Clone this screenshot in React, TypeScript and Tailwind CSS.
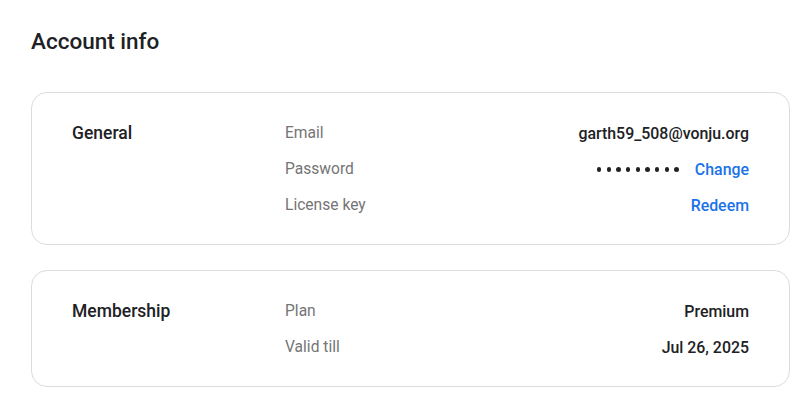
import React from "react";

const font = { fontFamily: 'Roboto, "Noto Sans", sans-serif' };

function Row({ label, children }: { label: string; children: React.ReactNode }) {
  return (
    <div className="flex h-[23px] items-center">
      <div className="text-[15.6px] text-[#757575]">{label}</div>
      <div className="ml-auto flex items-center text-[15.9px] font-medium text-[#202124]">{children}</div>
    </div>
  );
}

function Card({ title, children }: { title: string; children: React.ReactNode }) {
  return (
    <div className="flex rounded-[16px] border border-[#dadce0] pt-[29px] pb-[27px] pl-[40px] pr-[40px]">
      <div className="w-[213px] h-[23px] flex items-center text-[17.5px] font-medium text-[#202124]">{title}</div>
      <div className="flex flex-1 flex-col gap-[13px]">{children}</div>
    </div>
  );
}

export default function App() {
  return (
    <div className="min-h-[404px] w-[805px] bg-white" style={font}>
      <div className="px-[31px] pt-[28px]">
        <h1 className="text-[22.5px] font-medium leading-[27px] text-[#202124]">Account info</h1>
        <div className="mt-[37px] flex flex-col gap-[25px]">
          <div className="w-[759px]">
            <Card title="General">
              <Row label="Email">garth59_508@vonju.org</Row>
              <Row label="Password">
                <span className="flex gap-[5.2px]">
                  {Array.from({ length: 9 }).map((_, i) => (
                    <span key={i} className="block h-[4.5px] w-[4.5px] rounded-full bg-[#202124]" />
                  ))}
                </span>
                <span className="ml-[16px] text-[#1a73e8]">Change</span>
              </Row>
              <Row label="License key">
                <span className="text-[#1a73e8]">Redeem</span>
              </Row>
            </Card>
          </div>
          <div className="w-[759px]">
            <Card title="Membership">
              <Row label="Plan">Premium</Row>
              <Row label="Valid till">Jul 26, 2025</Row>
            </Card>
          </div>
        </div>
      </div>
    </div>
  );
}
